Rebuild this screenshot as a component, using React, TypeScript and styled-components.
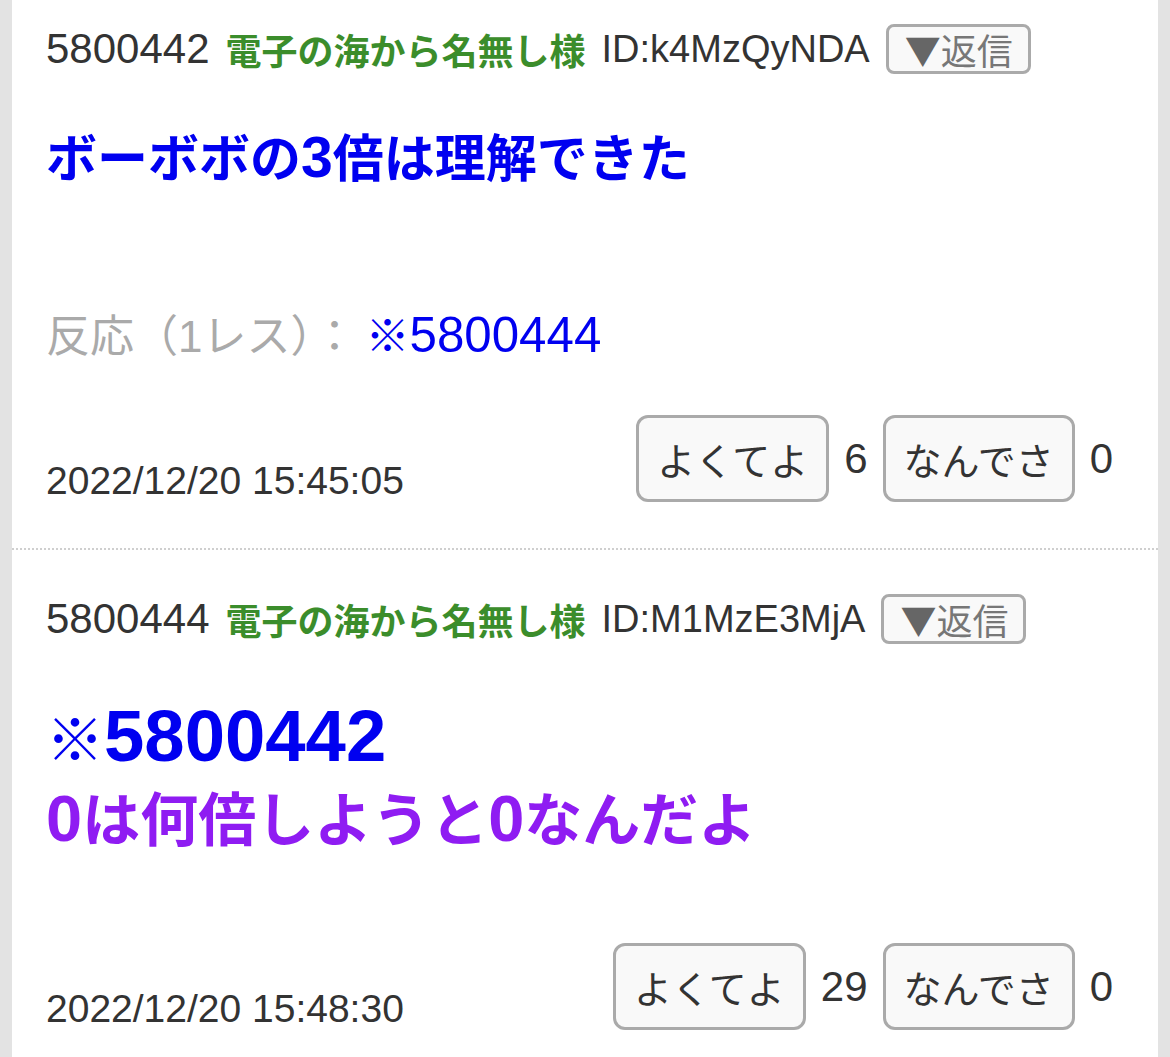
import React from 'react';
import styled, { createGlobalStyle } from 'styled-components';

const GlobalStyle = createGlobalStyle`
  html, body {
    margin: 0;
    padding: 0;
    background: #e3e3e3;
  }
  body {
    font-family: "Liberation Sans", "Noto Sans CJK JP", sans-serif;
    color: #333;
    overflow: hidden;
  }
`;

type Post = {
  no: string;
  id: string;
  bodySize: number;
  bodyLine: number;
  bodyTop: number;
  body: React.ReactNode;
  reactions?: string[];
  date: string;
  good: number;
  bad: number;
};

const posts: Post[] = [
  {
    no: '5800442',
    id: 'ID:k4MzQyNDA',
    bodySize: 51,
    bodyLine: 76,
    bodyTop: 48,
    body: (
      <Blue>
        ボーボボの<Num>3</Num>倍は理解できた
      </Blue>
    ),
    reactions: ['5800444'],
    date: '2022/12/20 15:45:05',
    good: 6,
    bad: 0,
  },
  {
    no: '5800444',
    id: 'ID:M1MzE3MjA',
    bodySize: 58,
    bodyLine: 80,
    bodyTop: 57,
    body: (
      <>
        <Blue>
          ※<Num scale={1.25}>5800442</Num>
        </Blue>
        <br />
        <Purple>
          <Num>0</Num>は何倍しようと<Num>0</Num>なんだよ
        </Purple>
      </>
    ),
    date: '2022/12/20 15:48:30',
    good: 29,
    bad: 0,
  },
];

export default function App() {
  return (
    <>
      <GlobalStyle />
      <Page>
        {posts.map((p) => (
          <PostItem key={p.no}>
            <Header>
              <PostNo>{p.no}</PostNo>
              <Name>電子の海から名無し様</Name>
              <UserId>{p.id}</UserId>
              <ReplyButton>
                <Tri>▼</Tri>返信
              </ReplyButton>
            </Header>
            <Body $size={p.bodySize} $line={p.bodyLine} $top={p.bodyTop}>
              {p.body}
            </Body>
            {p.reactions && (
              <Reactions>
                反応（1レス）：
                {p.reactions.map((r) => (
                  <ResLink key={r}>
                    ※<Num>{r}</Num>
                  </ResLink>
                ))}
              </Reactions>
            )}
            <Footer>
              <DateText>{p.date}</DateText>
              <Votes>
                <VoteButton>よくてよ</VoteButton>
                <Count>{p.good}</Count>
                <VoteButton>なんでさ</VoteButton>
                <Count>{p.bad}</Count>
              </Votes>
            </Footer>
          </PostItem>
        ))}
      </Page>
    </>
  );
}

function Blue({ children }: { children: React.ReactNode }) {
  return <BlueText>{children}</BlueText>;
}

function Purple({ children }: { children: React.ReactNode }) {
  return <PurpleText>{children}</PurpleText>;
}

function Num({ children, scale = 1.12 }: { children: React.ReactNode; scale?: number }) {
  return <NumText $scale={scale}>{children}</NumText>;
}

const Page = styled.main`
  margin: -20px 12px 0;
  background: #fff;
  min-height: 1100px;
`;

const PostItem = styled.article`
  display: flex;
  flex-direction: column;
  padding: 44px 45px 46px 34px;
  border-bottom: 2px dotted #cfcfcf;
`;

const Header = styled.div`
  display: flex;
  align-items: center;
  gap: 16px;
  height: 50px;
  white-space: nowrap;
`;

const PostNo = styled.span`
  font-size: 42px;
  color: #333;
`;

const Name = styled.span`
  font-size: 36px;
  font-weight: bold;
  color: #3b8d2b;
`;

const UserId = styled.span`
  font-size: 38px;
  color: #333;
`;

const ReplyButton = styled.span`
  display: inline-flex;
  align-items: center;
  box-sizing: border-box;
  height: 50px;
  padding: 0 15px 0 16px;
  border: 3px solid #aaa;
  border-radius: 8px;
  background: #f9f9f9;
  color: #777;
  font-family: "Noto Sans CJK JP", sans-serif;
  font-size: 36px;
  line-height: 44px;
`;

const Tri = styled.span`
  color: #666;
`;

const Body = styled.div<{ $size: number; $line: number; $top: number }>`
  margin: ${(p) => p.$top}px 0 37px;
  font-size: ${(p) => p.$size}px;
  line-height: ${(p) => p.$line}px;
  font-weight: bold;
  white-space: nowrap;
`;

const BlueText = styled.span`
  color: #0000f0;
`;

const PurpleText = styled.span`
  color: #8f1cf2;
`;

const NumText = styled.span<{ $scale: number }>`
  font-size: ${(p) => p.$scale}em;
  line-height: 0;
`;

const Reactions = styled.div`
  margin-top: 69px;
  font-size: 44px;
  line-height: 66px;
  color: #aaa;
  white-space: nowrap;
`;

const ResLink = styled.span`
  color: #0000f0;
  margin-left: 9px;
`;

const Footer = styled.div`
  display: flex;
  align-items: flex-end;
  justify-content: space-between;
  margin-top: 45px;
`;

const DateText = styled.span`
  font-size: 39px;
  line-height: 40px;
  margin-bottom: 1px;
  color: #333;
`;

const Votes = styled.div`
  display: flex;
  align-items: center;
  gap: 15px;
`;

const VoteButton = styled.span`
  display: inline-flex;
  align-items: center;
  justify-content: center;
  box-sizing: border-box;
  height: 87px;
  padding: 0 18px;
  border: 3px solid #aaa;
  border-radius: 12px;
  background: #f9f9f9;
  color: #333;
  font-size: 38px;
`;

const Count = styled.span`
  font-size: 42px;
  color: #333;
`;
